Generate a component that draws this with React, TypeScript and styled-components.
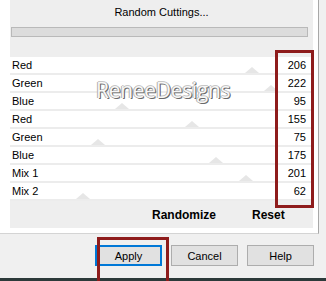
import React from "react";
import styled, { createGlobalStyle } from "styled-components";

const Global = createGlobalStyle`
  html, body { margin: 0; padding: 0; background: #f0f0f0; }
  body {
    width: 326px; height: 281px; overflow: hidden;
    font-family: "Liberation Sans", Arial, sans-serif;
    color: #000;
  }
`;

const Dialog = styled.div`
  position: relative;
  width: 326px;
  height: 281px;
  display: flex;
  flex-direction: column;
  background: #f0f0f0;
  overflow: hidden;
`;

const Panel = styled.div`
  box-sizing: border-box;
  width: 319px;
  height: 234px;
  background: #fff;
  border-right: 1px solid #a8a8a8;
  border-bottom: 1px solid #d4d4d4;
  padding: 0 5px 5px 10px;
  display: flex;
  flex-direction: column;
`;

const Frame = styled.div`
  flex: 1;
  background: #eeeeee;
  display: flex;
  flex-direction: column;
`;

const Top = styled.div`
  height: 57px;
  display: flex;
  flex-direction: column;
`;

const CutButton = styled.div`
  height: 26px;
  display: flex;
  align-items: center;
  justify-content: center;
  font-size: 11px;
  padding-bottom: 2px;
  box-sizing: border-box;
`;

const Groove = styled.div`
  height: 10px;
  margin: 1px 5px 0 1px;
  box-sizing: border-box;
  background: #dcdcdc;
  border: 1px solid #b9b9b9;
`;

const List = styled.div`
  display: flex;
  flex-direction: column;
  background: #fff;
`;

const Row = styled.div`
  position: relative;
  box-sizing: border-box;
  height: 18px;
  display: flex;
  align-items: center;
  justify-content: space-between;
  padding: 0 7px 0 2px;
  font-size: 11px;
  background: #fff;
  border-bottom: 2px solid #ececec;
  overflow: hidden;
`;

const Label = styled.span`
  position: relative;
  z-index: 1;
`;

const Value = styled.span`
  position: relative;
  z-index: 1;
`;

const Thumb = styled.div`
  position: absolute;
  bottom: 0;
  width: 0;
  height: 0;
  border-left: 7px solid transparent;
  border-right: 7px solid transparent;
  border-bottom: 6px solid #e6e6e6;
  transform: translateX(-7px);
`;

const Footer = styled.div`
  flex: 1;
  display: flex;
  align-items: center;
  font-size: 12px;
  font-weight: bold;
  padding-left: 142px;
  gap: 36px;
`;

const ButtonBar = styled.div`
  flex: 1;
  display: flex;
  align-items: flex-start;
  padding: 11px 0 0 95px;
  gap: 9px;
  background: #f0f0f0;
`;

const Button = styled.div<{ $focused?: boolean }>`
  box-sizing: border-box;
  width: 67px;
  height: 21px;
  display: flex;
  align-items: center;
  justify-content: center;
  font-size: 11px;
  background: #e1e1e1;
  border: ${(p) => (p.$focused ? "2px solid #0078d7" : "1px solid #adadad")};
`;

const BottomEdge = styled.div`
  height: 3px;
  background: #2c3a3a;
`;

const Highlight = styled.div`
  position: absolute;
  box-sizing: border-box;
  border: 3px solid #8e1c1c;
  pointer-events: none;
`;

const Watermark = styled.div`
  position: absolute;
  left: 96px;
  top: 76px;
  font-family: "Open Sans", "Liberation Sans", sans-serif;
  font-size: 21px;
  letter-spacing: -0.3px;
  color: #f7f7f7;
  text-shadow: 1px 1px 0 #6a6a6a, -1px 0 0 #b0b0b0, 0 -1px 0 #c8c8c8, 1px 0 0 #8a8a8a;
  pointer-events: none;
`;

const rows: [string, number][] = [
  ["Red", 206],
  ["Green", 222],
  ["Blue", 95],
  ["Red", 155],
  ["Green", 75],
  ["Blue", 175],
  ["Mix 1", 201],
  ["Mix 2", 62],
];

export default function App() {
  return (
    <Dialog>
      <Global />
      <Panel>
        <Frame>
          <Top>
            <CutButton>Random Cuttings...</CutButton>
            <Groove />
          </Top>
          <List>
            {rows.map(([label, v], i) => (
              <Row key={i}>
                <Thumb style={{ left: `${(v / 255) * 300}px` }} />
                <Label>{label}</Label>
                <Value>{v}</Value>
              </Row>
            ))}
          </List>
          <Footer>
            <span>Randomize</span>
            <span>Reset</span>
          </Footer>
        </Frame>
      </Panel>
      <ButtonBar>
        <Button $focused>Apply</Button>
        <Button>Cancel</Button>
        <Button>Help</Button>
      </ButtonBar>
      <BottomEdge />
      <Watermark>ReneeDesigns</Watermark>
      <Highlight style={{ left: 275, top: 50, width: 39, height: 158 }} />
      <Highlight style={{ left: 97, top: 237, width: 72, height: 50 }} />
    </Dialog>
  );
}
